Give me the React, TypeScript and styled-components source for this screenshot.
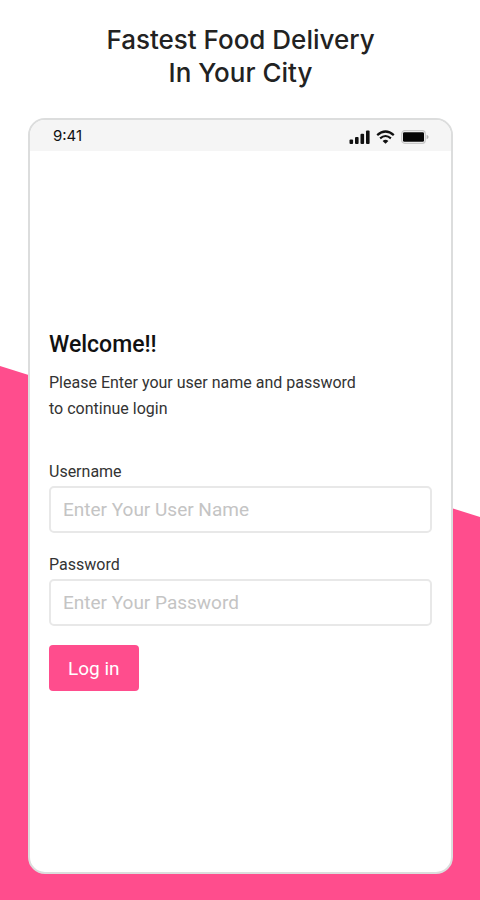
import React from "react";
import styled, { createGlobalStyle } from "styled-components";

const PINK = "#ff4d8d";

const GlobalStyle = createGlobalStyle`
  *, *::before { box-sizing: border-box; }
  body { margin: 0; background: #fff; }
`;

const Page = styled.main`
  position: relative;
  isolation: isolate;
  display: flex;
  flex-direction: column;
  min-height: 100vh;
  padding: 23px 27px 26px 28px;
  font-family: Roboto, "Liberation Sans", sans-serif;
  color: #333;

  &::before {
    content: "";
    position: absolute;
    inset: 0;
    z-index: -1;
    background: ${PINK};
    clip-path: polygon(0 366px, 100% 517px, 100% 100%, 0 100%);
  }
`;

const Headline = styled.h1`
  margin: 0 0 29px;
  font-family: Inter, "Open Sans", sans-serif;
  font-size: 26px;
  font-weight: 500;
  line-height: 33px;
  text-align: center;
  color: #222;
`;

const Phone = styled.section`
  flex: 1;
  display: flex;
  flex-direction: column;
  overflow: hidden;
  background: #fff;
  border: 2px solid #dcdddd;
  border-radius: 17px;
`;

const StatusBar = styled.header`
  display: flex;
  justify-content: space-between;
  align-items: center;
  height: 31px;
  padding: 0 22px 0 23px;
  background: #f5f5f5;
`;

const Clock = styled.time`
  font-family: Inter, sans-serif;
  font-size: 15px;
  font-weight: 400;
  line-height: 20px;
  color: #111;
`;

const StatusIcons = styled.div`
  display: flex;
  align-items: center;
  gap: 6px;
  padding-top: 2px;

  svg { display: block; }
`;

const LoginForm = styled.form`
  display: flex;
  flex-direction: column;
  align-items: flex-start;
  padding: 179px 19px 24px;
`;

const Welcome = styled.h2`
  margin: 0 0 10px;
  font-size: 23px;
  font-weight: 500;
  line-height: 30px;
  color: #111;
`;

const Intro = styled.p`
  margin: 0 0 40px;
  font-size: 16px;
  line-height: 26px;
`;

const Fields = styled.div`
  display: grid;
  gap: 22px;
  width: 100%;
  margin-bottom: 19px;
`;

const Field = styled.div`
  display: flex;
  flex-direction: column;
  gap: 4px;
`;

const Label = styled.label`
  font-size: 16px;
  line-height: 20px;
`;

const TextBox = styled.input`
  width: 100%;
  height: 47px;
  padding: 0 12px;
  border: 2px solid #e8e8e8;
  border-radius: 5px;
  background: #fff;
  font-family: inherit;
  font-size: 19px;
  color: #333;

  &::placeholder { color: #c4c4c4; opacity: 1; }
`;

const LoginButton = styled.button`
  height: 46px;
  padding: 0 19px;
  border: 0;
  border-radius: 4px;
  background: ${PINK};
  font-family: inherit;
  font-size: 19px;
  color: #fff;
  cursor: pointer;
`;

const SignalIcon = () => (
  <svg width="21" height="14" viewBox="0 0 21 14" fill="#111" aria-hidden="true">
    <rect x="0.5" y="9.5" width="3.6" height="4.5" rx="1" />
    <rect x="6" y="7" width="3.6" height="7" rx="1" />
    <rect x="11.5" y="3.8" width="3.6" height="10.2" rx="1" />
    <rect x="17" y="0.5" width="3.6" height="13.5" rx="1" />
  </svg>
);

const WifiIcon = () => (
  <svg width="19" height="14" viewBox="0 0 19 14" fill="none" stroke="#111" aria-hidden="true">
    <path d="M1.2 5.1Q9.5-2.1 17.8 5.1" strokeWidth="2.3" />
    <path d="M4.1 8.4Q9.5 3.6 14.9 8.4" strokeWidth="2.1" />
    <path d="M9.5 13.8 6.6 10.9Q9.5 8.5 12.4 10.9Z" fill="#111" stroke="none" />
  </svg>
);

const BatteryIcon = () => (
  <svg width="28" height="14" viewBox="0 0 28 14" aria-hidden="true">
    <rect x="0.7" y="0.7" width="23.6" height="12.6" rx="3" fill="none" stroke="#c8c8c8" strokeWidth="1.2" />
    <rect x="2" y="2.3" width="21" height="9.4" rx="1.3" fill="#050505" />
    <path d="M25.6 4.7Q27.6 5.4 27.6 7T25.6 9.3Z" fill="#b5b5b5" />
  </svg>
);

export default function App() {
  return (
    <>
      <GlobalStyle />
      <Page>
        <Headline>
          Fastest Food Delivery
          <br />
          In Your City
        </Headline>
        <Phone>
          <StatusBar>
            <Clock>9:41</Clock>
            <StatusIcons>
              <SignalIcon />
              <WifiIcon />
              <BatteryIcon />
            </StatusIcons>
          </StatusBar>
          <LoginForm onSubmit={(event) => event.preventDefault()}>
            <Welcome>Welcome!!</Welcome>
            <Intro>
              Please Enter your user name and password
              <br />
              to continue login
            </Intro>
            <Fields>
              <Field>
                <Label htmlFor="username">Username</Label>
                <TextBox id="username" type="text" placeholder="Enter Your User Name" />
              </Field>
              <Field>
                <Label htmlFor="password">Password</Label>
                <TextBox id="password" type="password" placeholder="Enter Your Password" />
              </Field>
            </Fields>
            <LoginButton type="submit">Log in</LoginButton>
          </LoginForm>
        </Phone>
      </Page>
    </>
  );
}
